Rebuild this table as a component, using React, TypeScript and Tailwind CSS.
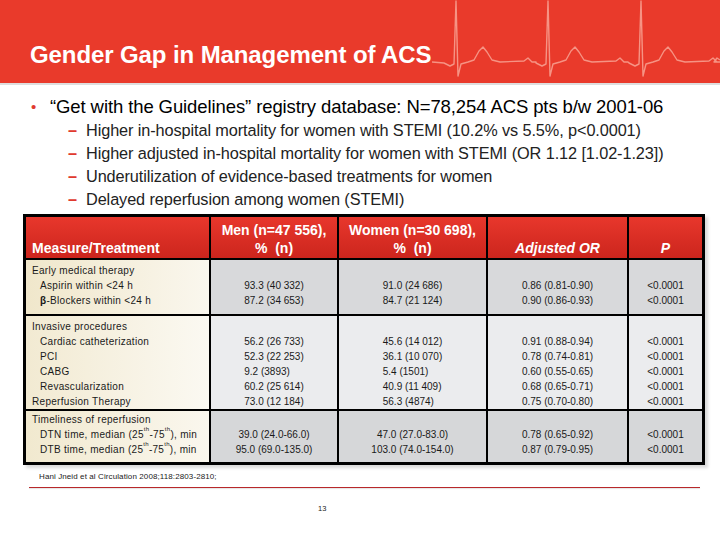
import React from 'react';

const spikes = [456, 548, 641];

function ecgPath() {
  let d = 'M432,62';
  spikes.forEach((s) => {
    d += ` L${s - 12},63 L${s - 6},66 L${s - 2},64 L${s},1 L${s + 2},76 L${s + 5},64 L${s + 12},62 L${s + 18},60 L${s + 23},51 L${s + 27},47 L${s + 31},52 L${s + 36},60 L${s + 44},62 L${s + 68},61 L${s + 72},58 L${s + 76},62 L${s + 80},62`;
  });
  d += ' L714,62 L717,58 L720,60';
  return d;
}

const subBullets = [
  'Higher in-hospital mortality for women with STEMI (10.2% vs 5.5%, p<0.0001)',
  'Higher adjusted in-hospital mortality for women with STEMI (OR 1.12 [1.02-1.23])',
  'Underutilization of evidence-based treatments for women',
  'Delayed reperfusion among women (STEMI)',
];

const Th = () => <sup className="text-[6px] align-super leading-none">th</sup>;

export default function App() {
  return (
    <div className="w-[720px] h-[540px] bg-white overflow-hidden font-['Liberation_Sans',Arial,sans-serif]">
      {/* Title band */}
      <header className="relative h-[85px] bg-[#e93a2b] border-b-2 border-[#dedede]">
        <svg className="absolute inset-0" width="720" height="83" viewBox="0 0 720 83">
          <path d={ecgPath()} fill="none" stroke="#f8a394" strokeWidth="1.4" strokeLinejoin="round" opacity="0.85" />
        </svg>
        <h1 className="relative pl-[30px] pt-[43px] text-[24px] leading-none font-bold text-white tracking-[-0.1px]">
          Gender Gap in Management of ACS
        </h1>
      </header>

      {/* Bullets */}
      <div className="mt-[10px]">
        <div className="flex items-center h-[24px] text-[18.5px] text-black">
          <span className="w-[50px] pl-[31px] text-[#e03a2e] text-[15px]">•</span>
          <span className="tracking-[-0.1px]">“Get with the Guidelines” registry database: N=78,254 ACS pts b/w 2001-06</span>
        </div>
        {subBullets.map((t) => (
          <div key={t} className="flex items-center h-[23px] text-[16.3px] text-[#222]">
            <span className="w-[86px] pl-[68px] text-[#e03a2e] font-bold">–</span>
            <span className="tracking-[-0.1px]">{t}</span>
          </div>
        ))}
      </div>

      {/* Table */}
      <div className="ml-[23px] mt-[3px] w-[682px] border-[3px] border-black bg-black grid grid-cols-[183px_126px_147px_139px_73px] gap-[2px] shadow-[3px_3px_3px_rgba(0,0,0,0.15)] text-[10px] text-[#1a1a1a]">
        {/* header */}
        <div className="h-[41px] bg-gradient-to-b from-[#e8372c] to-[#cc251d] flex items-end pb-[1px] pl-[6px] text-white font-bold text-[14px] leading-[18px]">
          Measure/Treatment
        </div>
        <div className="bg-gradient-to-b from-[#e8372c] to-[#cc251d] flex flex-col justify-end items-center pb-[1px] text-white font-bold text-[14px] leading-[18px] text-center">
          <span>Men (n=47 556),</span>
          <span>% &nbsp;(n)</span>
        </div>
        <div className="bg-gradient-to-b from-[#e8372c] to-[#cc251d] flex flex-col justify-end items-center pb-[1px] text-white font-bold text-[14px] leading-[18px] text-center">
          <span>Women (n=30 698),</span>
          <span>% &nbsp;(n)</span>
        </div>
        <div className="bg-gradient-to-b from-[#e8372c] to-[#cc251d] flex items-end justify-center pb-[1px] text-white font-bold italic text-[14px] leading-[18px]">
          Adjusted OR
        </div>
        <div className="bg-gradient-to-b from-[#e8372c] to-[#cc251d] flex items-end justify-center pb-[1px] text-white font-bold italic text-[14px] leading-[18px]">
          P
        </div>

        {/* Early medical therapy */}
        <div className="h-[54px] bg-gradient-to-r from-[#f0e7cb] to-[#faf7ee] pt-[3px] pl-[6px] leading-[15px] tracking-[0.3px]">
          <div>Early medical therapy</div>
          <div className="pl-[8px]">Aspirin within &lt;24 h</div>
          <div className="pl-[8px]"><b className="font-bold">β</b>-Blockers within &lt;24 h</div>
        </div>
        <Cell bg="bg-[#d8d9db]" pt="pt-[18px]" lines={['93.3 (40 332)', '87.2 (34 653)']} />
        <Cell bg="bg-[#d8d9db]" pt="pt-[18px]" lines={['91.0 (24 686)', '84.7 (21 124)']} />
        <Cell bg="bg-[#d8d9db]" pt="pt-[18px]" lines={['0.86 (0.81-0.90)', '0.90 (0.86-0.93)']} />
        <Cell bg="bg-[#d8d9db]" pt="pt-[18px]" lines={['<0.0001', '<0.0001']} />

        {/* Invasive procedures */}
        <div className="h-[93px] bg-gradient-to-r from-[#f2ead2] to-[#fbf9f2] pt-[3px] pl-[6px] leading-[15px] tracking-[0.3px]">
          <div>Invasive procedures</div>
          <div className="pl-[8px]">Cardiac catheterization</div>
          <div className="pl-[8px]">PCI</div>
          <div className="pl-[8px]">CABG</div>
          <div className="pl-[8px]">Revascularization</div>
          <div>Reperfusion Therapy</div>
        </div>
        <Cell bg="bg-[#ebecee]" pt="pt-[18px]" lines={['56.2 (26 733)', '52.3 (22 253)', '9.2 (3893)', '60.2 (25 614)', '73.0 (12 184)']} />
        <Cell bg="bg-[#ebecee]" pt="pt-[18px]" lines={['45.6 (14 012)', '36.1 (10 070)', '5.4 (1501)', '40.9 (11 409)', '56.3 (4874)']} />
        <Cell bg="bg-[#ebecee]" pt="pt-[18px]" lines={['0.91 (0.88-0.94)', '0.78 (0.74-0.81)', '0.60 (0.55-0.65)', '0.68 (0.65-0.71)', '0.75 (0.70-0.80)']} />
        <Cell bg="bg-[#ebecee]" pt="pt-[18px]" lines={['<0.0001', '<0.0001', '<0.0001', '<0.0001', '<0.0001']} />

        {/* Timeliness */}
        <div className="h-[51px] bg-gradient-to-r from-[#f1e9cf] to-[#faf7ee] pt-[1px] pl-[6px] leading-[15px] tracking-[0.3px]">
          <div>Timeliness of reperfusion</div>
          <div className="pl-[8px]">DTN time, median (25<Th />-75<Th />), min</div>
          <div className="pl-[8px]">DTB time, median (25<Th />-75<Th />), min</div>
        </div>
        <Cell bg="bg-[#d6d7d9]" pt="pt-[16px]" center lines={['39.0 (24.0-66.0)', '95.0 (69.0-135.0)']} />
        <Cell bg="bg-[#d6d7d9]" pt="pt-[16px]" center lines={['47.0 (27.0-83.0)', '103.0 (74.0-154.0)']} />
        <Cell bg="bg-[#d6d7d9]" pt="pt-[16px]" lines={['0.78 (0.65-0.92)', '0.87 (0.79-0.95)']} />
        <Cell bg="bg-[#d6d7d9]" pt="pt-[16px]" lines={['<0.0001', '<0.0001']} />
      </div>

      {/* Footer */}
      <div className="mt-[7px] pl-[39px] text-[8px] leading-[10px] text-[#222] tracking-[0.1px]">
        Hani Jneid et al Circulation 2008;118:2803-2810;
      </div>
      <div className="mt-[5px] ml-[29px] w-[671px] h-px bg-[#b8282a] shadow-[0_1px_1px_rgba(0,0,0,0.12)]" />
      <div className="mt-[16px] pl-[318px] text-[7.5px] leading-[10px] text-[#222]">13</div>
    </div>
  );
}

function Cell({ bg, pt, lines, center = false }: { bg: string; pt: string; lines: string[]; center?: boolean }) {
  return (
    <div className={`${bg} ${pt} flex justify-center leading-[15px]`}>
      <div className={center ? 'text-center' : 'text-left'}>
        {lines.map((l, i) => (
          <div key={i}>{l}</div>
        ))}
      </div>
    </div>
  );
}
